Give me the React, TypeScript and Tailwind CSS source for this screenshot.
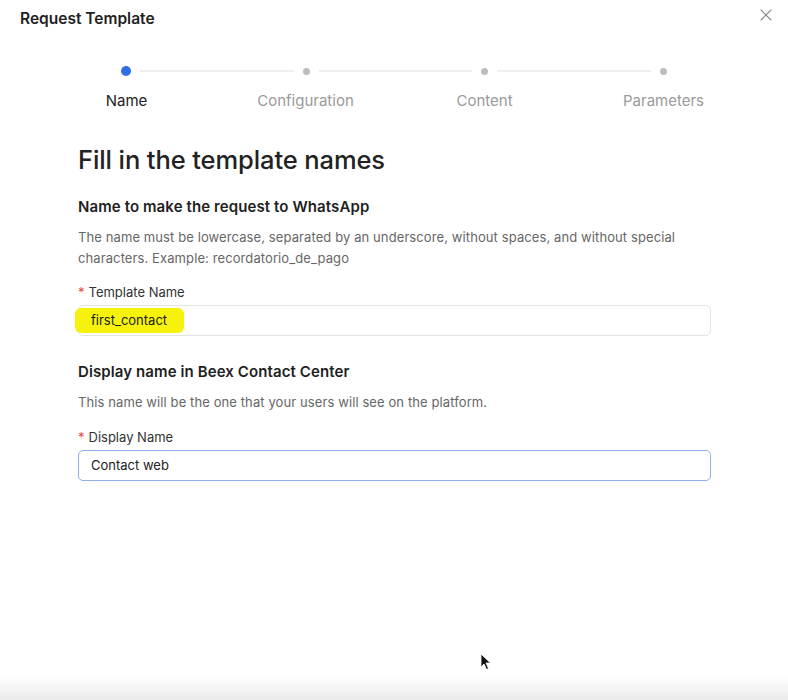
import { X } from "lucide-react";

const steps = ["Name", "Configuration", "Content", "Parameters"];

export default function App() {
  return (
    <div className="relative flex min-h-[700px] w-[788px] flex-col bg-white font-['Inter',sans-serif] text-[#1f1f1f]">
      {/* Header */}
      <div className="flex h-[38px] items-start justify-between pl-5 pr-[12px]">
        <h2 className="mt-[9px] text-[15.5px] font-semibold leading-5">
          Request Template
        </h2>
        <X size={20} strokeWidth={1.3} className="mt-[5px] text-[#8a8a8a]" />
      </div>

      {/* Stepper dots */}
      <div className="mt-[28px] flex h-[10px] items-center pl-[121px] pr-[121px]">
        <span className="h-[10px] w-[10px] shrink-0 rounded-full bg-[#2f6fe4]" />
        <span className="mx-[9px] h-[2px] flex-1 bg-[#efefef]" />
        <span className="h-[7px] w-[7px] shrink-0 rounded-full bg-[#bdbdbd]" />
        <span className="mx-[9px] h-[2px] flex-1 bg-[#efefef]" />
        <span className="h-[7px] w-[7px] shrink-0 rounded-full bg-[#bdbdbd]" />
        <span className="mx-[9px] h-[2px] flex-1 bg-[#efefef]" />
        <span className="h-[7px] w-[7px] shrink-0 rounded-full bg-[#bdbdbd]" />
      </div>

      {/* Stepper labels */}
      <div className="mt-[15px] grid grid-cols-[repeat(4,179px)] pl-[37px]">
        {steps.map((s, i) => (
          <div
            key={s}
            className={`text-center text-[15px] leading-5 ${
              i === 0 ? "text-[#222]" : "text-[#9a9a9a]"
            }`}
          >
            {s}
          </div>
        ))}
      </div>

      {/* Content */}
      <div className="pl-[78px] pr-[77px]">
        <h1 className="mt-[33px] text-[25.5px] font-medium leading-8 tracking-[-0.1px] text-[#222]">
          Fill in the template names
        </h1>

        <h3 className="mt-[21px] text-[15px] font-semibold leading-5 tracking-[0.1px]">
          Name to make the request to WhatsApp
        </h3>
        <p className="mt-[10px] text-[13px] leading-[21px] tracking-[0.1px] text-[#666]">
          The name must be lowercase, separated by an underscore, without spaces, and without special
          characters. Example: recordatorio_de_pago
        </p>

        <div className="mt-[14px] text-[13px] leading-[18px] text-[#333]">
          <span className="mr-1 text-[#e5484d]">*</span>Template Name
        </div>
        <div className="mt-[4px] flex h-[31px] items-center rounded-[5px] border border-[#e4e4e4] px-3 text-[13px] text-[#222]">
          <span className="-ml-[16px] rounded-[6px] bg-[#f6f20c] py-[4px] pl-[16px] pr-[17px] leading-[17px]">
            first_contact
          </span>
        </div>

        <h3 className="mt-[26px] text-[15px] font-semibold leading-5 tracking-[0.1px]">
          Display name in Beex Contact Center
        </h3>
        <p className="mt-[10px] text-[13px] leading-[21px] tracking-[0.1px] text-[#666]">
          This name will be the one that your users will see on the platform.
        </p>

        <div className="mt-[15px] text-[13px] leading-[18px] text-[#333]">
          <span className="mr-1 text-[#e5484d]">*</span>Display Name
        </div>
        <div className="mt-[4px] flex h-[31px] items-center rounded-[5px] border border-[#8fb0e8] px-3 text-[13px] text-[#222]">
          Contact web
        </div>
      </div>

      <div className="flex-1" />
      <div className="h-[24px] bg-gradient-to-b from-white to-[#ebebeb]" />

      {/* Mouse cursor */}
      <svg
        className="absolute left-[480px] top-[653px]"
        width="12"
        height="18"
        viewBox="0 0 12 18"
      >
        <path d="M1 1 L1 14 L4 11 L6.5 16.5 L8.5 15.5 L6 10 L10.5 10 Z" fill="#111" stroke="#fff" strokeWidth="0.8" />
      </svg>
    </div>
  );
}
